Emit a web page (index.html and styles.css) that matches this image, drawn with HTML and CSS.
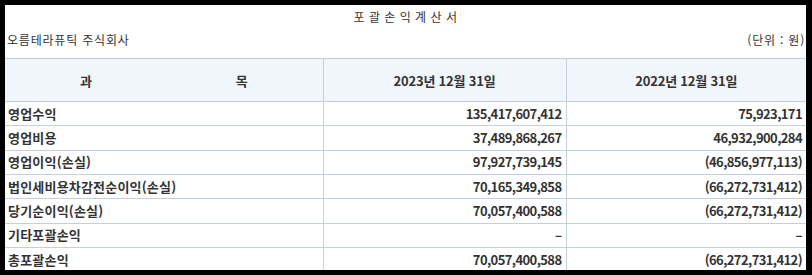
FILE: index.html
```html
<!DOCTYPE html>
<html lang="ko">
<head>
<meta charset="utf-8">
<title>포괄손익계산서</title>
<link rel="stylesheet" href="styles.css">
</head>
<body>
<div class="frame">
  <div class="title">포 괄 손 익 계 산 서</div>
  <div class="info">
    <span class="company">오름테라퓨틱 주식회사</span>
    <span class="unit">(단위 : 원)</span>
  </div>
  <table class="stmt">
    <colgroup>
      <col class="c1"><col class="c2"><col class="c3">
    </colgroup>
    <thead>
      <tr>
        <th><div class="subject"><span>과</span><span>목</span></div></th>
        <th>2023년 12월 31일</th>
        <th>2022년 12월 31일</th>
      </tr>
    </thead>
    <tbody>
      <tr><td class="name">영업수익</td><td class="num">135,417,607,412</td><td class="num">75,923,171</td></tr>
      <tr><td class="name">영업비용</td><td class="num">37,489,868,267</td><td class="num">46,932,900,284</td></tr>
      <tr><td class="name">영업이익(손실)</td><td class="num">97,927,739,145</td><td class="num">(46,856,977,113)</td></tr>
      <tr><td class="name">법인세비용차감전순이익(손실)</td><td class="num">70,165,349,858</td><td class="num">(66,272,731,412)</td></tr>
      <tr><td class="name">당기순이익(손실)</td><td class="num">70,057,400,588</td><td class="num">(66,272,731,412)</td></tr>
      <tr><td class="name">기타포괄손익</td><td class="num">–</td><td class="num">–</td></tr>
      <tr><td class="name">총포괄손익</td><td class="num">70,057,400,588</td><td class="num">(66,272,731,412)</td></tr>
    </tbody>
  </table>
</div>
</body>
</html>
```

FILE: styles.css
```css
html, body {
  margin: 0;
  padding: 0;
  background: #000;
}
body {
  padding: 5px 6px 5px 5px;
  font-family: "Noto Sans CJK KR", "Noto Sans", sans-serif;
  color: #333;
}
.frame {
  background: #fff;
  height: 265px;
  overflow: hidden;
}
.title {
  text-align: center;
  font-size: 12px;
  line-height: 18px;
  padding-top: 3px;
  letter-spacing: 0.5px;
}
.info {
  display: flex;
  justify-content: space-between;
  font-size: 12px;
  line-height: 18px;
  margin-top: 5px;
  margin-bottom: 9px;
  padding: 0 1px 0 2px;
  letter-spacing: 0.8px;
}
.stmt {
  width: 801px;
  border-collapse: collapse;
  table-layout: fixed;
  font-size: 13px;
}
.c1 { width: 318px; }
.c2 { width: 243px; }
.c3 { width: 240px; }
.stmt th, .stmt td {
  border: 1px solid #c4d0dc;
  padding: 0;
}
.stmt tr > :first-child { border-left: none; }
.stmt tr > :last-child { border-right: none; }
.stmt th {
  background: #f1f6fc;
  height: 42px;
  font-weight: 700;
  text-align: center;
  letter-spacing: -0.2px;
}
.subject {
  display: flex;
  justify-content: center;
  gap: 144px;
}
.stmt td {
  height: 23.33px;
  font-weight: 700;
  line-height: 16px;
}
.stmt td.name {
  padding-left: 3px;
  letter-spacing: 0.2px;
}
.stmt td.num {
  text-align: right;
  padding-right: 4px;
  letter-spacing: -0.6px;
}
```
